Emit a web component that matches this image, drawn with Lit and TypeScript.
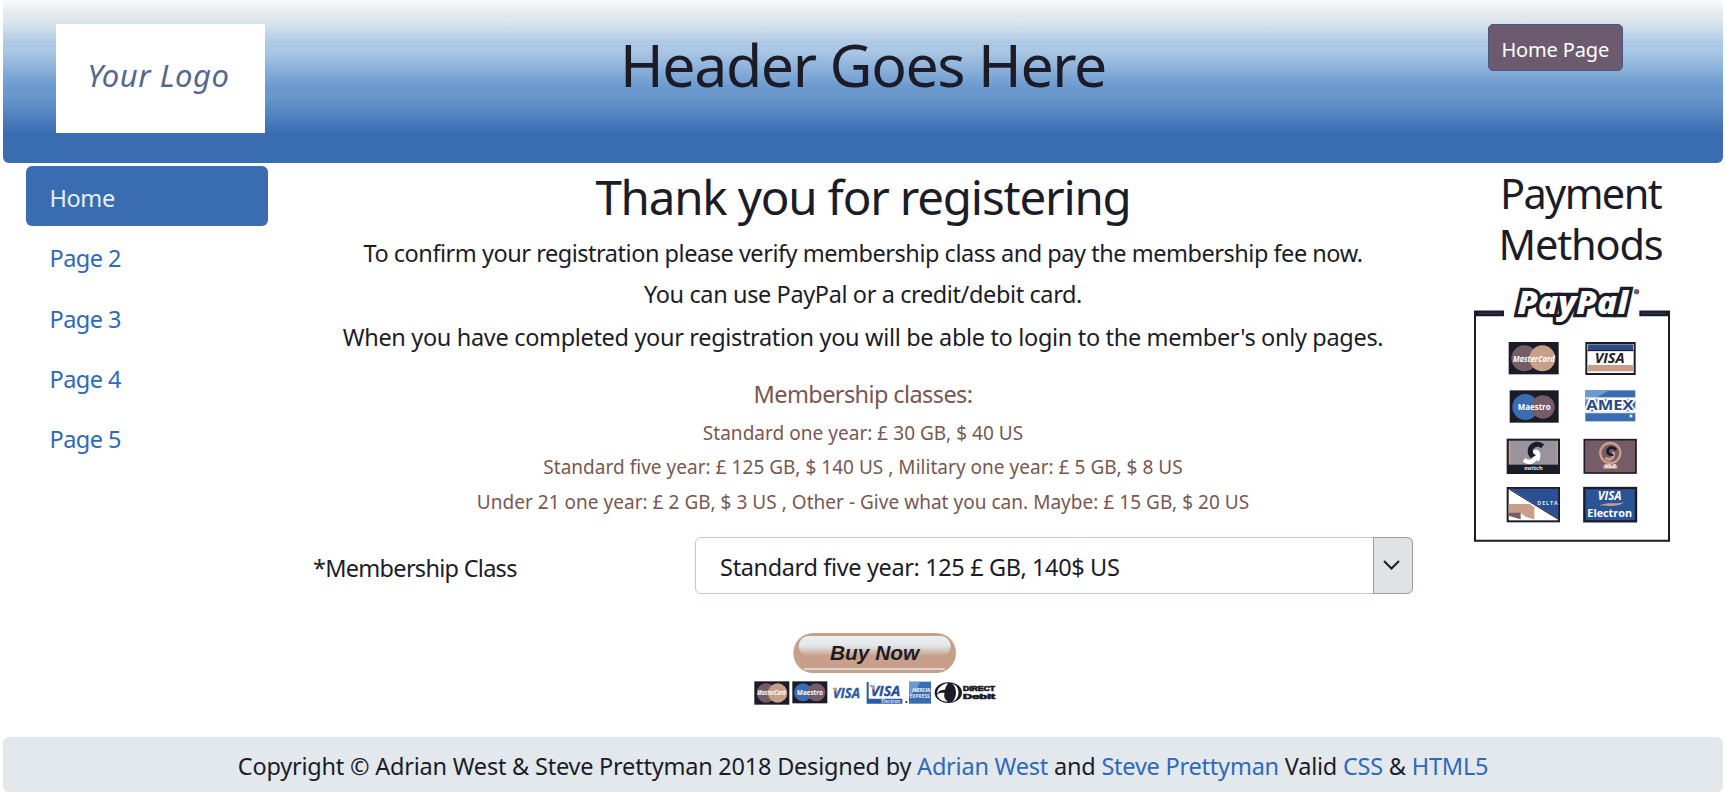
import { LitElement, html, css, svg } from "lit";
import { customElement, property } from "lit/decorators.js";
import { classMap } from "lit/directives/class-map.js";

@customElement("site-nav")
class SiteNav extends LitElement {
  @property({ type: Array }) items: string[] = [];
  static styles = css`
    :host { display: block; }
    a {
      display: flex; align-items: center; box-sizing: border-box; height: 60.3px;
      padding: 4px 24px 0; border-radius: 6px; color: #2f69b8; text-decoration: none;
      font-size: 23.5px; letter-spacing: -0.55px;
    }
    a.active { background: #3a6cb2; color: #e8eef4; letter-spacing: -0.4px; }
  `;
  render() {
    return html`${this.items.map(
      (t, i) => html`<a href="#" class=${classMap({ active: i === 0 })}>${t}</a>`
    )}`;
  }
}

@customElement("payment-panel")
class PaymentPanel extends LitElement {
  static styles = css`
    :host { display: block; }
    svg { display: block; width: 230px; height: 290px; margin: 0 auto; }
    .sans { font-family: "Open Sans", "Noto Sans", sans-serif; font-weight: 700; }
    .logo { font-family: "Open Sans", sans-serif; font-weight: 800; font-style: italic; }
  `;
  render() {
    return html`<svg viewBox="5 0 690 870">
      ${svg`
      <path d="M47 138V812H629V138" fill="none" stroke="#1c1c28" stroke-width="6"/>
      <path d="M44 130H134M540 130H632" stroke="#1c1c28" stroke-width="17"/>
      <path d="M60 130H124M550 130H618" stroke="#3a6cb2" stroke-width="3" stroke-dasharray="3 3"/>
      <text class="logo" x="174" y="132" font-size="93" textLength="332" lengthAdjust="spacingAndGlyphs" fill="#fff" stroke="#1c1c28" stroke-width="19" stroke-linejoin="miter" paint-order="stroke">PayPal</text>
      <circle cx="532" cy="65" r="8" fill="#755c66"/>

      <rect x="148" y="216" width="150" height="97" fill="#1c1c28"/>
      <circle cx="195" cy="265" r="39" fill="#755c66"/><circle cx="249" cy="265" r="39" fill="#c8a08a"/>
      <text class="sans" x="161" y="275" font-size="26" font-style="italic" textLength="125" lengthAdjust="spacingAndGlyphs" fill="#fff">MasterCard</text>

      <rect x="381" y="219" width="145" height="93" fill="#fff" stroke="#1c1c28" stroke-width="6"/>
      <rect x="386" y="223" width="135" height="20" fill="#2b4a86"/>
      <path d="M384 242H523" stroke="#1c1c28" stroke-width="3"/>
      <rect x="386" y="285" width="135" height="19" fill="#c8a08a"/>
      <text class="sans" x="406" y="280" font-size="43" font-style="italic" textLength="90" lengthAdjust="spacingAndGlyphs" fill="#1c1c28">VISA</text>

      <rect x="151" y="361" width="147" height="97" fill="#1c1c28"/>
      <circle cx="198" cy="411" r="39" fill="#3a6cb2"/><circle cx="251" cy="411" r="35" fill="#755c66"/>
      <text class="sans" x="175" y="420" font-size="28" textLength="99" lengthAdjust="spacingAndGlyphs" fill="#fff">Maestro</text>

      <rect x="378" y="361" width="150" height="93" fill="#3a6cb2"/>
      <path d="M378 361H450L425 375L378 400Z" fill="#6d9bcf"/>
      <path d="M378 427H528M378 385H528" stroke="#e2e8ec" stroke-width="6"/>
      <text class="sans" x="381" y="421" font-size="44" textLength="142" lengthAdjust="spacingAndGlyphs" fill="#2b4a86" stroke="#fff" stroke-width="10" paint-order="stroke">AMEX</text>
      <rect x="511" y="434" width="8" height="8" fill="#e2e8ec"/>

      <rect x="145" y="509" width="154" height="100" fill="#9a929c" stroke="#1c1c28" stroke-width="6"/>
      <path d="M152 514V584M294 514V584" stroke="#c8a08a" stroke-width="4"/>
      <rect x="145" y="584" width="154" height="26" fill="#1c1c28"/>
      <path d="M194 569C216 586 233 568 228 546C237 542 240 560 232 571" fill="none" stroke="#fff" stroke-width="13"/>
      <path d="M250 529C232 515 209 528 213 549C216 559 222 558 223 560" fill="none" stroke="#1c1c28" stroke-width="15"/>
      <text class="sans" x="195" y="601" font-size="17" textLength="55" lengthAdjust="spacingAndGlyphs" fill="#e2e8ec">switch</text>

      <rect x="375" y="509" width="155" height="100" fill="#755c66" stroke="#1c1c28" stroke-width="5"/>
      <circle cx="453" cy="549" r="30" fill="none" stroke="#c8a08a" stroke-width="7"/>
      <path d="M438 564C455 575 466 561 461 546" fill="none" stroke="#c8a08a" stroke-width="9"/>
      <path d="M470 540C459 526 441 534 446 549C449 556 458 551 459 558" fill="none" stroke="#1c1c28" stroke-width="9"/>
      <rect x="432" y="585" width="42" height="11" fill="#c8a08a"/>
      <text class="sans" x="436" y="595" font-size="13" textLength="34" lengthAdjust="spacingAndGlyphs" fill="#fff">SOLO</text>

      <rect x="145" y="654" width="154" height="100" fill="#fff" stroke="#1c1c28" stroke-width="6"/>
      <path d="M150 656H297V747Z" fill="#2b4f90"/><path d="M150 658L297 748" stroke="#1c1c28" stroke-width="3"/>
      <path d="M148 702H212L225 712V748L200 741L184 729H148Z" fill="#c8a08a"/>
      <path d="M148 728H184V748L160 741L148 737Z" fill="#755c66"/>
      <text class="sans" x="234" y="704" font-size="16" textLength="61" fill="#e2e8ec">DELTA</text>

      <rect x="375" y="654" width="155" height="100" fill="#2b5496" stroke="#1c1c28" stroke-width="7"/>
      <text class="sans" x="415" y="690" font-size="36" font-style="italic" textLength="72" lengthAdjust="spacingAndGlyphs" fill="#fff">VISA</text>
      <path d="M420 706C450 694 472 704 494 696C480 712 440 708 420 706Z" fill="#c8a08a"/>
      <text class="sans" x="384" y="740" font-size="32" textLength="134" lengthAdjust="spacingAndGlyphs" fill="#fff">Electron</text>`}
    </svg>`;
  }
}

@customElement("buy-now")
class BuyNow extends LitElement {
  static styles = css`
    :host { display: block; }
    svg { display: block; width: 300px; height: 100px; margin: 0 auto; }
    .buy { font-family: "Liberation Sans", sans-serif; font-weight: 700; font-style: italic; }
    .debit { font-family: "Liberation Sans", sans-serif; font-weight: 700; font-size: 19px; }
    .sans { font-family: "Open Sans", "Noto Sans", sans-serif; font-weight: 700; }
    .stop-light { stop-color: #eef1f3; } .stop-mid { stop-color: #e2e5e7; } .stop-tan { stop-color: #c8a08a; }
  `;
  render() {
    return html`<svg viewBox="0 0 900 300">
      ${svg`
      <defs><linearGradient id="gloss" x1="0" y1="0" x2="0" y2="1">
        <stop class="stop-light" offset="0"/><stop class="stop-mid" offset=".5"/><stop class="stop-tan" offset="1"/>
      </linearGradient></defs>
      <rect x="220" y="39" width="488" height="120" rx="60" fill="#c8a08a"/>
      <rect x="236" y="48" width="456" height="60" rx="30" fill="url(#gloss)"/>
      <path d="M252 147H674" stroke="#e2e8ec" stroke-width="4"/>
      <text class="buy" x="330" y="121" font-size="62" textLength="268" lengthAdjust="spacingAndGlyphs" fill="#1c1c28">Buy Now</text>

      <rect x="103" y="184" width="105" height="70" fill="#1c1c28"/>
      <circle cx="139" cy="219" r="29" fill="#755c66"/><circle cx="173" cy="219" r="29" fill="#c8a08a"/>
      <text class="sans" x="112" y="226" font-size="20" font-style="italic" textLength="85" lengthAdjust="spacingAndGlyphs" fill="#fff">MasterCard</text>

      <rect x="217" y="184" width="105" height="66" fill="#1c1c28"/>
      <circle cx="249" cy="217" r="27" fill="#3a6cb2"/><circle cx="289" cy="217" r="27" fill="#755c66"/>
      <text class="sans" x="231" y="225" font-size="22" textLength="78" lengthAdjust="spacingAndGlyphs" fill="#fff">Maestro</text>

      <text class="sans" x="338" y="234" font-size="41" font-style="italic" textLength="82" lengthAdjust="spacingAndGlyphs" fill="#2b5ba4" stroke="#2b5ba4">VISA</text>
      <path d="M336 205L350 205L354 220Z" fill="#c8a08a"/>

      <path d="M440 186V251H547V236H446V186Z" fill="#2b5ba4"/>
      <text class="sans" x="452" y="227" font-size="45" font-style="italic" textLength="89" lengthAdjust="spacingAndGlyphs" fill="#24509a" stroke="#24509a">VISA</text>
      <path d="M446 194L462 196L467 215Z" fill="#c8a08a"/>
      <text class="sans" x="484" y="249" font-size="13" textLength="57" lengthAdjust="spacingAndGlyphs" fill="#e2e8ec">Electron</text>
      <circle cx="559" cy="246" r="3" fill="#1c1c28"/>

      <rect x="567" y="185" width="66" height="66" fill="#3a6cb2"/>
      <path d="M567 185H600L590 208L567 230Z" fill="#6d9bcf"/>
      <text class="sans" x="577" y="217" font-size="15" textLength="54" lengthAdjust="spacingAndGlyphs" fill="#fff">AMERICAN</text>
      <text class="sans" x="569" y="233" font-size="14" textLength="60" lengthAdjust="spacingAndGlyphs" fill="#e2e8ec">EXPRESS</text>

      <ellipse cx="685" cy="218" rx="41" ry="31" fill="#1c1c28"/>
      <path d="M651 222C650 206 664 193 684 190C680 197 676 203 675 209C663 209 655 213 651 222Z" fill="#fff"/>
      <path d="M696 191C722 196 722 239 696 245C712 236 712 200 696 191Z" fill="#fff"/>
      <path d="M651 225C656 218 664 217 674 219C670 229 674 238 684 245C668 245 655 238 651 225Z" fill="#fff"/>
      <text class="debit" x="729" y="214" textLength="96" lengthAdjust="spacingAndGlyphs" fill="#1c1c28" stroke="#1c1c28" stroke-width="2">DIRECT</text>
      <text class="debit" x="729" y="236" textLength="96" lengthAdjust="spacingAndGlyphs" fill="#1c1c28" stroke="#1c1c28" stroke-width="2">Debit</text>`}
    </svg>`;
  }
}

@customElement("app-root")
class AppRoot extends LitElement {
  static styles = css`
    :host {
      display: flex; flex-direction: column; box-sizing: border-box; height: 795px; padding: 0 2px 3px 3px;
      background: #fff; color: #1c1c28; font-family: "Noto Sans", "Open Sans", sans-serif;
    }
    h1, h2, h3, h4, p { margin: 0; font-weight: 400; }
    header {
      display: grid; grid-template-columns: 285px 1fr 285px; align-items: start; flex: none;
      box-sizing: border-box; height: 163px; padding-top: 24px; border-radius: 0 0 6px 6px;
      background: linear-gradient(#fbfbfb 0, #e2e8ec 15px, #e0e7ed 20px, #adc9e6 43px, #a9c6e4 52px, #6d9bcf 86px, #6897cc 97px, #3a6cb2 134px);
    }
    .logo {
      display: flex; align-items: center; justify-content: center; width: 208.5px; height: 109px;
      margin-left: 53px; box-sizing: border-box; padding: 0 4px 8px 0; background: #fff; color: #56678f;
      font-size: 31px; font-style: italic; letter-spacing: 0.5px;
    }
    h1 { padding-top: 4.6px; text-align: center; font-size: 59px; line-height: 70px; letter-spacing: -1.4px; }
    .home {
      display: flex; align-items: center; justify-content: center; width: 134.5px; height: 47px;
      margin-left: 50px; padding: 3px 0 0; box-sizing: border-box; border: 1px solid #4a5684; border-radius: 5px;
      background: #6c5b6e; color: #fff; font: inherit; font-size: 20px; letter-spacing: -0.15px;
    }
    main { display: grid; grid-template-columns: 285px 1fr 285px; flex: 1; min-height: 0; }
    site-nav { padding: 3px 20.5px 0 22.5px; }
    .content { padding-top: 4.6px; text-align: center; }
    h2 { margin-bottom: 9px; font-size: 47.5px; line-height: 58px; letter-spacing: -1.2px; }
    p { font-size: 23.5px; line-height: 36px; }
    .confirm { margin-bottom: 5px; letter-spacing: -0.47px; }
    .use { margin-bottom: 7.3px; letter-spacing: -0.39px; }
    .when { margin-bottom: 21.3px; letter-spacing: -0.33px; }
    h4 { margin-bottom: 3px; color: #775752; font-size: 23.5px; line-height: 36px; letter-spacing: -0.6px; }
    .fees { padding-top: 0.4px; color: #775752; font-size: 19px; line-height: 34.6px; letter-spacing: 0.03px; }
    .form {
      display: grid; grid-template-columns: 381.6px 1fr; align-items: center; height: 57.5px;
      margin-top: 17.5px; padding: 0 25px 0 25px; text-align: left; font-size: 23.5px;
    }
    label { padding-top: 4px; letter-spacing: -0.72px; }
    .select {
      display: flex; align-items: stretch; justify-content: space-between; height: 57px; box-sizing: border-box;
      border: 1.5px solid #b9cce0; border-radius: 6px; letter-spacing: -0.37px;
    }
    .value { padding: 12px 0 0 24.5px; line-height: 34px; }
    .arrow {
      display: flex; align-items: center; justify-content: center; width: 40px; margin: -1px; box-sizing: border-box;
      border: 1.5px solid #a09aa4; border-radius: 0 6px 6px 0; background: #dfe3e6;
    }
    .arrow svg { width: 17px; height: 10px; margin: 0 4px 1px 0; }
    buy-now { padding: 26px 0 0 14px; }
    aside { padding-top: 4.5px; text-align: center; }
    h3 { font-size: 41.5px; line-height: 51px; letter-spacing: -1.6px; }
    .methods { letter-spacing: -1.2px; }
    payment-panel { padding: 0.5px 10px 0 0; }
    footer {
      display: flex; flex: none; align-items: center; justify-content: center; height: 55px; box-sizing: border-box;
      padding-top: 3px; border-radius: 6px; background: #e2e8ec; font-size: 23.5px; letter-spacing: -0.22px; white-space: pre;
    }
    footer a { color: #2f69b8; text-decoration: none; }
  `;
  render() {
    return html`
      <header>
        <div class="logo">Your Logo</div>
        <h1>Header Goes Here</h1>
        <button class="home">Home Page</button>
      </header>
      <main>
        <site-nav .items=${["Home", "Page 2", "Page 3", "Page 4", "Page 5"]}></site-nav>
        <section class="content">
          <h2>Thank you for registering</h2>
          <p class="confirm">To confirm your registration please verify membership class and pay the membership fee now.</p>
          <p class="use">You can use PayPal or a credit/debit card.</p>
          <p class="when">When you have completed your registration you will be able to login to the member's only pages.</p>
          <h4>Membership classes:</h4>
          <div class="fees">
            <div>Standard one year: £ 30 GB, $ 40 US</div>
            <div>Standard five year: £ 125 GB, $ 140 US , Military one year: £ 5 GB, $ 8 US</div>
            <div>Under 21 one year: £ 2 GB, $ 3 US , Other - Give what you can. Maybe: £ 15 GB, $ 20 US</div>
          </div>
          <div class="form">
            <label>*Membership Class</label>
            <div class="select">
              <span class="value">Standard five year: 125 £ GB, 140$ US</span>
              <span class="arrow"><svg viewBox="0 0 17 10"><path d="M1 1L8.5 8.5L16 1" fill="none" stroke="#1c1c28" stroke-width="2"/></svg></span>
            </div>
          </div>
          <buy-now></buy-now>
        </section>
        <aside>
          <h3>Payment<br /><span class="methods">Methods</span></h3>
          <payment-panel></payment-panel>
        </aside>
      </main>
      <footer><span>Copyright © Adrian West &amp; Steve Prettyman 2018 Designed by <a href="#">Adrian West</a> and <a href="#">Steve Prettyman</a> Valid <a href="#">CSS</a> &amp; <a href="#">HTML5</a></span></footer>
    `;
  }
}
